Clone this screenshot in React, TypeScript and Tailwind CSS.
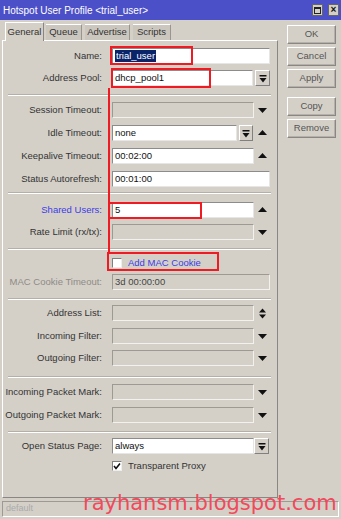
import type { ReactNode } from "react";

const font = { fontFamily: '"Liberation Sans", Arial, sans-serif' };

function Down() {
  return (
    <svg width="9" height="6" viewBox="0 0 9 6">
      <polygon points="0,1 9,1 4.5,6" fill="#111" />
    </svg>
  );
}

function Up() {
  return (
    <svg width="9" height="6" viewBox="0 0 9 6">
      <polygon points="0,5 9,5 4.5,0" fill="#111" />
    </svg>
  );
}

function UpDown() {
  return (
    <svg width="9" height="11" viewBox="0 0 9 11">
      <polygon points="1,4.5 8,4.5 4.5,0.5" fill="#111" />
      <polygon points="1,6.5 8,6.5 4.5,10.5" fill="#111" />
    </svg>
  );
}

function DropBtn({ w = "w-[15px]" }: { w?: string }) {
  return (
    <div
      className={`${w} h-[16px] flex items-center justify-center bg-[#d4d0c8] border border-t-white border-l-white border-b-[#808080] border-r-[#808080]`}
    >
      <svg width="8" height="9" viewBox="0 0 8 9">
        <rect x="0.5" y="1" width="7" height="1.5" fill="#111" />
        <polygon points="0.5,4 7.5,4 4,8.5" fill="#111" />
      </svg>
    </div>
  );
}

function Field({
  value,
  w,
  disabled,
  selected,
}: {
  value?: string;
  w: string;
  disabled?: boolean;
  selected?: boolean;
}) {
  return (
    <div
      className={`${w} h-[16px] flex items-center px-[2px] text-[9.5px] border ${
        disabled
          ? "bg-[#d4d0c8] border-t-[#9d9a94] border-l-[#9d9a94] border-b-[#f2f1ee] border-r-[#f2f1ee] text-[#444]"
          : "bg-white border-t-[#8c8c8c] border-l-[#8c8c8c] border-b-[#e6e6e6] border-r-[#e6e6e6] text-[#111]"
      }`}
    >
      {selected ? (
        <span className="bg-[#0a246a] text-white leading-[12px] px-[1px]">{value}</span>
      ) : (
        value
      )}
    </div>
  );
}

function Row({
  label,
  mt,
  labelColor = "text-[#333]",
  children,
}: {
  label: string;
  mt: string;
  labelColor?: string;
  children: ReactNode;
}) {
  return (
    <div className={`flex items-center h-[16px] ${mt}`}>
      <span className={`w-[99px] text-right text-[9.5px] whitespace-nowrap ${labelColor}`}>
        {label}
      </span>
      <div className="ml-[10px] flex items-center">{children}</div>
    </div>
  );
}

function Arrow({ children }: { children: ReactNode }) {
  return <div className="w-[16px] flex justify-center">{children}</div>;
}

function Sep({ mt }: { mt: string }) {
  return (
    <div className={`${mt} ml-[5px] w-[263px] h-[2px] border-t border-t-[#b4b0a8] border-b border-b-white`} />
  );
}

function Check({ checked }: { checked?: boolean }) {
  return (
    <div className="w-[10px] h-[10px] bg-white border border-t-[#808080] border-l-[#808080] border-b-[#eee] border-r-[#eee] flex items-center justify-center">
      {checked && (
        <svg width="8" height="8" viewBox="0 0 8 8">
          <polyline points="1,4 3,6.5 7,1.5" fill="none" stroke="#111" strokeWidth="1.6" />
        </svg>
      )}
    </div>
  );
}

function Btn({ label, mt }: { label: string; mt?: string }) {
  return (
    <div
      className={`${mt ?? ""} w-[49px] h-[19px] flex items-center justify-center text-[9.5px] text-[#555] bg-[#d4d0c8] border border-t-white border-l-white border-b-[#8a8782] border-r-[#8a8782] shadow-[inset_-1px_-1px_0_#b5b1aa]`}
    >
      {label}
    </div>
  );
}

export default function App() {
  return (
    <div
      className="relative w-[341px] h-[519px] bg-[#d4d0c8] overflow-hidden flex flex-col"
      style={font}
    >
      {/* title bar */}
      <div className="h-[20px] bg-[#4c50c8] flex items-center pl-[3px] pr-[2px]">
        <span className="text-white text-[10px] flex-1">Hotspot User Profile &lt;trial_user&gt;</span>
        <div className="w-[11px] h-[12px] bg-[#d4d0c8] border border-[#666] flex items-center justify-center">
          <div className="w-[7px] h-[7px] border border-[#222] border-t-2" />
        </div>
        <div className="ml-[5px] w-[11px] h-[12px] bg-[#d4d0c8] border border-[#666] flex items-center justify-center text-[10px] leading-none text-[#111] font-bold">
          ×
        </div>
      </div>

      <div className="flex h-[480px]">
        {/* left: tabs + panel */}
        <div className="w-[278px] pl-[2px] flex flex-col">
          <div className="h-[20px] flex items-end text-[9.5px] text-[#333]">
            <div className="ml-[3px] h-[19px] w-[39px] flex items-center justify-center bg-[#d4d0c8] border-l border-t border-white border-r border-r-[#8a8782] -mb-[1px] z-10">
              General
            </div>
            <div className="ml-[2px] h-[16px] w-[36px] flex items-center justify-center bg-[#cbc7bf] border-t border-t-white border-r border-r-[#9a968f]">
              Queue
            </div>
            <div className="ml-[3px] h-[16px] w-[45px] flex items-center justify-center bg-[#cbc7bf] border-t border-t-white border-r border-r-[#9a968f]">
              Advertise
            </div>
            <div className="ml-[3px] h-[16px] w-[38px] flex items-center justify-center bg-[#cbc7bf] border-t border-t-white border-r border-r-[#9a968f]">
              Scripts
            </div>
          </div>
          <div className="h-[458px] border border-t-white border-l-white border-r-[#8a8782] border-b-[#8a8782] flex flex-col">
            <Row label="Name:" mt="mt-[7px]">
              <Field w="w-[158px]" value="trial_user" selected />
            </Row>
            <Row label="Address Pool:" mt="mt-[6px]">
              <Field w="w-[141px]" value="dhcp_pool1" />
              <div className="ml-[2px]">
                <DropBtn />
              </div>
            </Row>
            <Sep mt="mt-[8px]" />
            <Row label="Session Timeout:" mt="mt-[6px]">
              <Field w="w-[142px]" disabled />
              <Arrow>
                <Down />
              </Arrow>
            </Row>
            <Row label="Idle Timeout:" mt="mt-[7px]">
              <Field w="w-[125px]" value="none" />
              <div className="ml-[2px]">
                <DropBtn w="w-[14px]" />
              </div>
              <div className="w-[16px] flex justify-center ml-[1px]">
                <Up />
              </div>
            </Row>
            <Row label="Keepalive Timeout:" mt="mt-[7px]">
              <Field w="w-[142px]" value="00:02:00" />
              <Arrow>
                <Up />
              </Arrow>
            </Row>
            <Row label="Status Autorefresh:" mt="mt-[7px]">
              <Field w="w-[158px]" value="00:01:00" />
            </Row>
            <Sep mt="mt-[5px]" />
            <Row label="Shared Users:" mt="mt-[8px]" labelColor="text-[#3c3ce6]">
              <Field w="w-[142px]" value="5" />
              <Arrow>
                <Up />
              </Arrow>
            </Row>
            <Row label="Rate Limit (rx/tx):" mt="mt-[6px]">
              <Field w="w-[142px]" disabled />
              <Arrow>
                <Down />
              </Arrow>
            </Row>
            <Sep mt="mt-[8px]" />
            <div className="mt-[5px] h-[16px] flex items-center pl-[109px]">
              <Check />
              <span className="ml-[6px] text-[9.5px] text-[#3c3ce6]">Add MAC Cookie</span>
            </div>
            <Row label="MAC Cookie Timeout:" mt="mt-[3px]" labelColor="text-[#8e8b86]">
              <Field w="w-[158px]" disabled value="3d 00:00:00" />
            </Row>
            <Sep mt="mt-[8px]" />
            <Row label="Address List:" mt="mt-[5px]">
              <Field w="w-[142px]" disabled />
              <Arrow>
                <UpDown />
              </Arrow>
            </Row>
            <Row label="Incoming Filter:" mt="mt-[7px]">
              <Field w="w-[142px]" disabled />
              <Arrow>
                <Down />
              </Arrow>
            </Row>
            <Row label="Outgoing Filter:" mt="mt-[6px]">
              <Field w="w-[142px]" disabled />
              <Arrow>
                <Down />
              </Arrow>
            </Row>
            <Sep mt="mt-[10px]" />
            <Row label="Incoming Packet Mark:" mt="mt-[6px]">
              <Field w="w-[142px]" disabled />
              <Arrow>
                <Down />
              </Arrow>
            </Row>
            <Row label="Outgoing Packet Mark:" mt="mt-[7px]">
              <Field w="w-[142px]" disabled />
              <Arrow>
                <Down />
              </Arrow>
            </Row>
            <Sep mt="mt-[8px]" />
            <Row label="Open Status Page:" mt="mt-[5px]">
              <Field w="w-[142px]" value="always" />
              <DropBtn />
            </Row>
            <div className="mt-[4px] h-[16px] flex items-center pl-[109px]">
              <Check checked />
              <span className="ml-[6px] text-[9.5px] text-[#333]">Transparent Proxy</span>
            </div>
          </div>
        </div>

        {/* right: buttons */}
        <div className="pl-[9px] pt-[5px] flex flex-col">
          <Btn label="OK" />
          <Btn label="Cancel" mt="mt-[3px]" />
          <Btn label="Apply" mt="mt-[3px]" />
          <Btn label="Copy" mt="mt-[9px]" />
          <Btn label="Remove" mt="mt-[3px]" />
        </div>
      </div>

      {/* status bar */}
      <div className="mt-[1px] mx-[2px] h-[16px] border border-t-[#9d9a94] border-l-[#9d9a94] border-b-white border-r-white flex items-center pl-[3px] text-[9px] text-[#aaa]">
        default
      </div>

      {/* red annotations */}
      <div className="absolute left-[110px] top-[46px] w-[83px] h-[19px] border-2 border-[#f01a22]" />
      <div className="absolute left-[111px] top-[68px] w-[100px] h-[20px] border-2 border-[#f01a22]" />
      <div className="absolute left-[108px] top-[88px] w-[2px] h-[165px] bg-[#f01a22]" />
      <div className="absolute left-[108px] top-[202px] w-[94px] h-[17px] border-2 border-[#f01a22]" />
      <div className="absolute left-[107px] top-[252px] w-[112px] h-[19px] border-2 border-[#f01a22]" />

      {/* watermark */}
      <div
        className="absolute left-[83px] top-[491px] text-[21px] leading-[24px] text-[#f04a5c] whitespace-nowrap"
        style={{ fontFamily: '"DejaVu Sans", sans-serif' }}
      >
        rayhansm.blogspot.com
      </div>
    </div>
  );
}
